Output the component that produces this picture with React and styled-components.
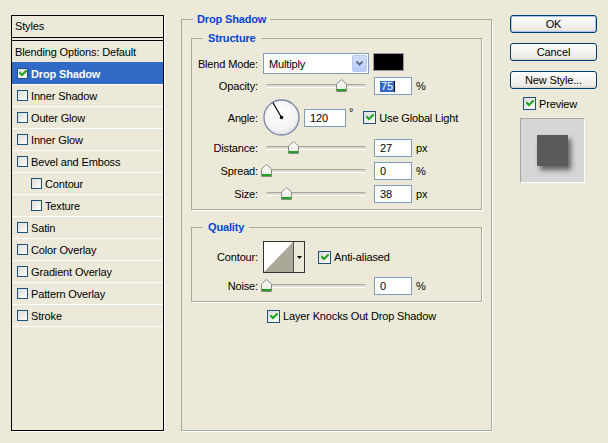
import React from 'react';
import styled, { createGlobalStyle } from 'styled-components';

const GlobalStyle = createGlobalStyle`
  body {
    margin: 0;
    background: #ECE9D8;
  }
`;

const Dialog = styled.div`
  width: 608px;
  height: 443px;
  box-sizing: border-box;
  padding: 13px 11px 0 11px;
  display: flex;
  align-items: flex-start;
  background: #ECE9D8;
  font-family: "Liberation Sans", Arial, sans-serif;
  font-size: 11px;
  letter-spacing: -0.15px;
  color: #000;
  overflow: hidden;
`;

/* ---- left styles list ---- */

const StylesPanel = styled.div`
  margin-top: 2px;
  width: 153px;
  height: 416px;
  box-sizing: border-box;
  flex-shrink: 0;
  border: 1px solid #000;
  box-shadow: 1px 1px 0 #fff;
  display: flex;
  flex-direction: column;
`;

const PanelHeader = styled.div`
  height: 21px;
  line-height: 21px;
  padding-left: 3px;
  border-bottom: 1px solid #000;
  margin-bottom: 2px;
`;

const StyleList = styled.div`
  flex: 1;
  border-top: 1px solid #000;
`;

const StyleRow = styled.div`
  height: 21px;
  border-bottom: 1px solid #fff;
  display: flex;
  align-items: center;
  gap: 3px;
  padding-left: ${p => (p.$plain ? 3 : p.$indent ? 19 : 5)}px;
  background: ${p => (p.$selected ? '#316AC5' : 'transparent')};
  box-shadow: ${p => (p.$selected ? '0 -1px 0 #316AC5' : 'none')};
  color: ${p => (p.$selected ? '#fff' : '#000')};
  font-weight: ${p => (p.$selected ? 'bold' : 'normal')};
  white-space: nowrap;
`;

const Box = styled.span`
  width: ${p => p.$size}px;
  height: ${p => p.$size}px;
  box-sizing: border-box;
  flex-shrink: 0;
  border: 1px solid #1C5180;
  background: linear-gradient(135deg, #DCDBD5 0%, #F4F4F0 70%, #FFFFFF 100%);
  display: flex;
  align-items: center;
  justify-content: center;
`;

const CheckMark = () => (
  <svg width="8" height="7" viewBox="0 0 8 7">
    <path d="M1 3 L3 5 L7 1" stroke="#21A121" strokeWidth="2" fill="none" strokeLinecap="square" />
  </svg>
);

const Checkbox = ({ checked, size = 13 }) => (
  <Box $size={size}>{checked && <CheckMark />}</Box>
);

/* ---- middle group boxes ---- */

const GroupBox = styled.fieldset`
  margin: ${p => p.$mt || 0}px 0 0 0;
  padding: 0 ${p => p.$px || 0}px;
  border: 1px solid #ACA899;
  box-shadow: 1px 1px 0 #fff;
  min-width: 0;
  box-sizing: border-box;
`;

const MainGroup = styled(GroupBox)`
  width: 311px;
  height: 418px;
  flex-shrink: 0;
  margin-left: 17px;
`;

const Legend = styled.legend`
  margin-left: ${p => p.$ml}px;
  padding: 0 ${p => p.$pad}px;
  line-height: 13px;
  font-weight: bold;
  color: #0046D5;
`;

const Rows = styled.div`
  display: flex;
  flex-direction: column;
  padding: ${p => p.$pt}px 0 6px 0;
`;

const Field = styled.div`
  display: flex;
  align-items: center;
  height: ${p => p.$h}px;
  margin-top: ${p => p.$mt || 0}px;
  padding-left: ${p => p.$pl || 0}px;
`;

const Label = styled.span`
  width: 66px;
  margin-right: 4px;
  text-align: right;
  flex-shrink: 0;
  white-space: nowrap;
`;

const Select = styled.div`
  margin-left: 1px;
  width: 106px;
  height: 21px;
  box-sizing: border-box;
  border: 1px solid #7F9DB9;
  background: #fff;
  display: flex;
  align-items: center;
  padding-left: 5px;
`;

const SelectButton = styled.span`
  margin-left: auto;
  margin-right: 1px;
  width: 15px;
  height: 17px;
  box-sizing: border-box;
  border: 1px solid #B4C8F6;
  border-radius: 2px;
  background: linear-gradient(#D2DEFC, #B8CCF8);
  display: flex;
  align-items: center;
  justify-content: center;
`;

const Swatch = styled.span`
  align-self: flex-start;
  margin-left: 4px;
  width: 31px;
  height: 18px;
  box-sizing: border-box;
  border: 1px solid #9A9A9A;
  background: #000;
`;

const SliderBox = styled.div`
  position: relative;
  width: 108px;
  height: 18px;
  display: flex;
  align-items: center;
  flex-shrink: 0;
`;

const Track = styled.div`
  margin: 0 4px;
  flex: 1;
  height: 2px;
  border-top: 1px solid #A5A397;
  border-bottom: 1px solid #fff;
  border-radius: 2px;
  background: #DEDCD0;
`;

const Thumb = styled.svg`
  position: absolute;
  top: 2px;
`;

const Slider = ({ value }) => (
  <SliderBox>
    <Track />
    <Thumb width="11" height="13" viewBox="0 0 11 13" style={{ left: 4 + value - 5 }}>
      <defs>
        <linearGradient id="tg" x1="0" y1="0" x2="0" y2="1">
          <stop offset="0" stopColor="#FFFFFF" />
          <stop offset="1" stopColor="#E6E6E0" />
        </linearGradient>
      </defs>
      <path d="M0.5 12.5 V5 L5.5 0.5 L10.5 5 V12.5 Z" fill="url(#tg)" stroke="#8C8C84" />
      <rect x="1" y="10" width="9" height="2" fill="#21A121" />
    </Thumb>
  </SliderBox>
);

const NumInput = styled.div`
  margin-left: 4px;
  width: ${p => p.$w || 38}px;
  height: 18px;
  box-sizing: border-box;
  border: 1px solid #7F9DB9;
  background: #fff;
  padding-left: 5px;
  line-height: 16px;
  flex-shrink: 0;
  display: flex;
  align-items: center;
`;

const Selected = styled.span`
  background: #316AC5;
  color: #fff;
  line-height: 11px;
  padding: 0 1px;
  border-right: 1px solid #000;
`;

const Unit = styled.span`
  margin-left: ${p => p.$ml || 4}px;
  align-self: ${p => (p.$top ? 'flex-start' : 'auto')};
  margin-top: ${p => (p.$top ? 7 : 0)}px;
`;

const CheckLabel = styled.label`
  display: flex;
  align-items: center;
  gap: 3px;
  margin-left: ${p => p.$ml || 0}px;
  white-space: nowrap;
`;

const Dial = () => (
  <svg width="37" height="37" viewBox="0 0 37 37" style={{ marginLeft: 1, flexShrink: 0 }}>
    <defs>
      <radialGradient id="dg" cx="0.45" cy="0.4" r="0.6">
        <stop offset="0" stopColor="#FFFFFF" />
        <stop offset="0.8" stopColor="#F2F2F2" />
        <stop offset="1" stopColor="#DCDCE4" />
      </radialGradient>
    </defs>
    <circle cx="18.5" cy="18.5" r="17.5" fill="url(#dg)" stroke="#7684A4" strokeWidth="1.3" />
    <line x1="18.5" y1="18.5" x2="10" y2="3.8" stroke="#000" strokeWidth="1.2" />
    <circle cx="18.5" cy="18.5" r="1.8" fill="#000" />
  </svg>
);

const ContourBox = styled.div`
  margin-left: 1px;
  width: 42px;
  height: 32px;
  box-sizing: border-box;
  border: 1px solid #333;
  display: flex;
  flex-shrink: 0;
`;

const ContourArrow = styled.span`
  flex: 1;
  border-left: 1px solid #555;
  background: #ECE9D8;
  display: flex;
  align-items: center;
  justify-content: center;
`;

/* ---- right column ---- */

const ButtonColumn = styled.div`
  margin-left: 18px;
  margin-top: 2px;
  width: 87px;
  flex-shrink: 0;
  display: flex;
  flex-direction: column;
`;

const Button = styled.button`
  height: 18px;
  margin-bottom: 10px;
  box-sizing: border-box;
  padding: 0;
  border: 1px solid #003C74;
  border-radius: 3px;
  background: linear-gradient(#FFFFFF 0%, #F3F2EE 50%, #ECEBE6 85%, #D6D0C5 100%);
  box-shadow: ${p => (p.$default ? 'inset 0 0 0 1px #A9C4F0' : 'none')};
  font-family: inherit;
  font-size: 11px;
  letter-spacing: inherit;
  line-height: 16px;
  color: #000;
`;

const PreviewCheck = styled(CheckLabel)`
  margin-top: -2px;
  padding-left: 13px;
`;

const PreviewBox = styled.div`
  margin: 8px 0 0 10px;
  width: 65px;
  height: 65px;
  box-sizing: border-box;
  border: 1px solid;
  border-color: #ACA899 #fff #fff #ACA899;
  background: #D6D6D6;
  display: flex;
  align-items: center;
  justify-content: center;
`;

const PreviewSquare = styled.div`
  width: 31px;
  height: 31px;
  background: #5A5A5A;
  box-shadow: 3px 4px 5px rgba(0, 0, 0, 0.55);
`;

const styleItems = [
  { name: 'Drop Shadow', checked: true, selected: true },
  { name: 'Inner Shadow' },
  { name: 'Outer Glow' },
  { name: 'Inner Glow' },
  { name: 'Bevel and Emboss' },
  { name: 'Contour', indent: true },
  { name: 'Texture', indent: true },
  { name: 'Satin' },
  { name: 'Color Overlay' },
  { name: 'Gradient Overlay' },
  { name: 'Pattern Overlay' },
  { name: 'Stroke' },
];

export default function App() {
  return (
    <>
      <GlobalStyle />
      <Dialog>
        <StylesPanel>
          <PanelHeader>Styles</PanelHeader>
          <StyleList>
            <StyleRow $plain>Blending Options: Default</StyleRow>
            {styleItems.map(item => (
              <StyleRow key={item.name} $indent={item.indent} $selected={item.selected}>
                <Checkbox size={11} checked={item.checked} />
                {item.name}
              </StyleRow>
            ))}
          </StyleList>
        </StylesPanel>

        <MainGroup $px={9}>
          <Legend $ml={2} $pad={4}>Drop Shadow</Legend>

          <GroupBox $mt={6}>
            <Legend $ml={11} $pad={5}>Structure</Legend>
            <Rows $pt={8}>
              <Field $h={21}>
                <Label>Blend Mode:</Label>
                <Select>
                  Multiply
                  <SelectButton>
                    <svg width="7" height="5" viewBox="0 0 7 5">
                      <path d="M0.5 0.5 L3.5 3.5 L6.5 0.5" stroke="#4D6185" strokeWidth="1.6" fill="none" />
                    </svg>
                  </SelectButton>
                </Select>
                <Swatch />
              </Field>
              <Field $h={18} $mt={3}>
                <Label>Opacity:</Label>
                <Slider value={75} />
                <NumInput><Selected>75</Selected></NumInput>
                <Unit>%</Unit>
              </Field>
              <Field $h={37} $mt={4}>
                <Label>Angle:</Label>
                <Dial />
                <NumInput $w={42}>120</NumInput>
                <Unit $ml={3} $top>°</Unit>
                <CheckLabel $ml={10}>
                  <Checkbox checked />
                  Use Global Light
                </CheckLabel>
              </Field>
              <Field $h={18} $mt={3}>
                <Label>Distance:</Label>
                <Slider value={27} />
                <NumInput>27</NumInput>
                <Unit>px</Unit>
              </Field>
              <Field $h={18} $mt={5}>
                <Label>Spread:</Label>
                <Slider value={0} />
                <NumInput>0</NumInput>
                <Unit>%</Unit>
              </Field>
              <Field $h={18} $mt={5}>
                <Label>Size:</Label>
                <Slider value={20} />
                <NumInput>38</NumInput>
                <Unit>px</Unit>
              </Field>
            </Rows>
          </GroupBox>

          <GroupBox $mt={11}>
            <Legend $ml={11} $pad={5}>Quality</Legend>
            <Rows $pt={7}>
              <Field $h={32}>
                <Label>Contour:</Label>
                <ContourBox>
                  <svg width="29" height="30" viewBox="0 0 29 30">
                    <rect width="29" height="30" fill="#fff" />
                    <polygon points="0,30 29,0 29,30" fill="#ACA898" />
                  </svg>
                  <ContourArrow>
                    <svg width="5" height="3" viewBox="0 0 5 3">
                      <polygon points="0,0 5,0 2.5,3" fill="#000" />
                    </svg>
                  </ContourArrow>
                </ContourBox>
                <CheckLabel $ml={13}>
                  <Checkbox checked />
                  Anti-aliased
                </CheckLabel>
              </Field>
              <Field $h={18} $mt={4}>
                <Label>Noise:</Label>
                <Slider value={0} />
                <NumInput>0</NumInput>
                <Unit>%</Unit>
              </Field>
            </Rows>
          </GroupBox>

          <Field $h={14} $mt={7} $pl={76}>
            <CheckLabel>
              <Checkbox checked />
              Layer Knocks Out Drop Shadow
            </CheckLabel>
          </Field>
        </MainGroup>

        <ButtonColumn>
          <Button $default>OK</Button>
          <Button>Cancel</Button>
          <Button>New Style...</Button>
          <PreviewCheck>
            <Checkbox checked />
            Preview
          </PreviewCheck>
          <PreviewBox>
            <PreviewSquare />
          </PreviewBox>
        </ButtonColumn>
      </Dialog>
    </>
  );
}
